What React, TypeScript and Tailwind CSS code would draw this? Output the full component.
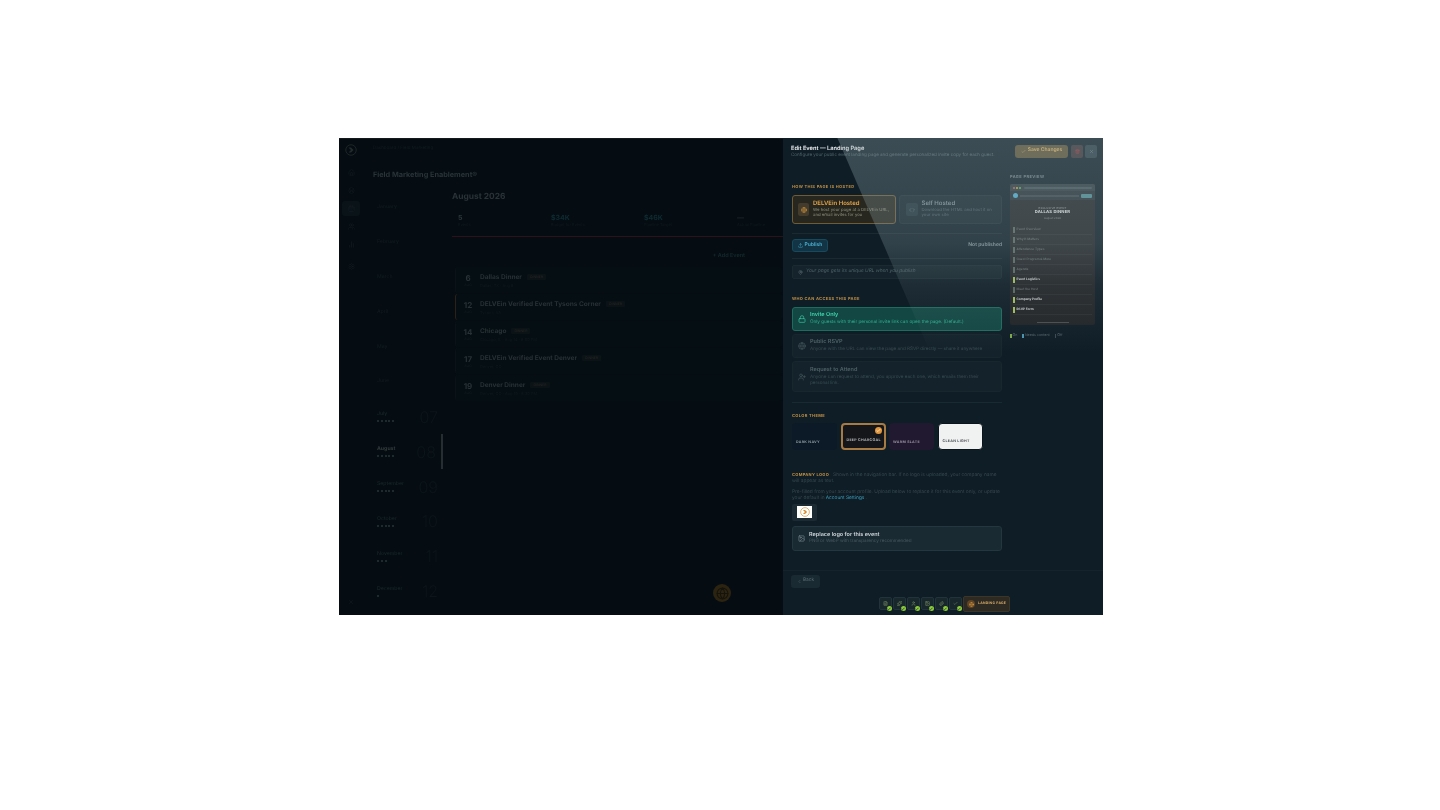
import React from "react";
import { Lock, Globe, UserPlus, Upload, Code, Check, Trash2, X, MapPin, ChevronLeft, Image, FileText, Settings, User, Calendar, Home, BarChart2, Users, Layers, Paperclip, Sparkles } from "lucide-react";

const months = [
  { n: "January", c: "01", dots: 0 },
  { n: "February", c: "02", dots: 0 },
  { n: "March", c: "03", dots: 0 },
  { n: "April", c: "04", dots: 0 },
  { n: "May", c: "05", dots: 0 },
  { n: "June", c: "06", dots: 0 },
  { n: "July", c: "07", dots: 5 },
  { n: "August", c: "08", dots: 5 },
  { n: "September", c: "09", dots: 5 },
  { n: "October", c: "10", dots: 5 },
  { n: "November", c: "11", dots: 3 },
  { n: "December", c: "12", dots: 1 },
];

const events = [
  { day: "6", t: "Dallas Dinner", w: "Dallas, TX · Aug 6" },
  { day: "12", t: "DELVEin Verified Event Tysons Corner", w: "Tysons, VA", on: true },
  { day: "14", t: "Chicago", w: "Chicago, IL · Aug 14 · 6:00 PM" },
  { day: "17", t: "DELVEin Verified Event Denver", w: "Denver, CO" },
  { day: "19", t: "Denver Dinner", w: "Denver, CO · Aug 19 · 6:30 PM" },
];

const stats = [
  { v: "5", l: "Events", c: "text-[#2c373b]", w: "w-[93px]" },
  { v: "$34K", l: "Budget for Events", c: "text-[#0e2c31]", w: "w-[93px]" },
  { v: "$46K", l: "Pipeline Target", c: "text-[#0e2c31]", w: "w-[93px]" },
  { v: "—", l: "Actual Pipeline", c: "text-[#1f282c]", w: "w-[42px]" },
];

const previewRows = [
  ["Event Overview", 0], ["Why It Matters", 0], ["Attendance Types", 0], ["Guest Program & More", 0], ["Agenda", 0],
  ["Event Logistics", 1], ["Meet the Host", 0], ["Company Profile", 1], ["RSVP Form", 1],
] as const;

function Logo({ size, color = "#d98a2b" }: { size: number; color?: string }) {
  return (
    <svg width={size} height={size} viewBox="0 0 24 24" fill="none">
      <circle cx="12" cy="12" r="10.5" stroke={color} strokeWidth="1.6" />
      <path d="M7 7h5l5 5-5 5H7l5-5z" fill={color} />
    </svg>
  );
}

function Dashboard() {
  return (
    <div className="flex w-[444px] h-full bg-[#050d12] border-t border-[#14191c]">
      <div className="w-[24px] shrink-0 flex flex-col items-center pt-[5px] text-[#141e24]">
        <div className="mb-[13px] opacity-60"><Logo size={12} color="#3a3f3f" /></div>
        <Home size={7} className="mb-[11px]" />
        <Layers size={7} className="mb-[7px]" />
        <div className="w-[18px] h-[15px] rounded-[3px] bg-[#0a1318] flex items-center justify-center mb-[7px]"><Calendar size={7} /></div>
        <Users size={7} className="mb-[11px]" />
        <BarChart2 size={7} className="mb-[15px]" />
        <Settings size={7} />
        <X size={6} className="mt-auto mb-[10px]" />
      </div>
      <div className="flex-1 min-w-0 flex flex-col pl-[10px]">
        <div className="h-[20px] flex items-center text-[4.5px] text-[#111b21]">Dashboard / Field Marketing</div>
        <div className="h-[13px] mt-[9px] text-[7.3px] leading-[13px] font-bold text-[#293338]">Field Marketing Enablement®</div>
        <div className="flex flex-1 min-h-0">
          <div className="w-[70px] shrink-0 pt-[9px] pl-[4px]">
            {months.map((m) => {
              const cur = m.c === "08";
              return (
                <div key={m.n} className={`relative h-[34.9px] flex items-center justify-between pr-[5px] ${cur ? "border-r-2 border-[#262e32]" : ""}`}>
                  <div>
                    <div className={`text-[5.2px] leading-[7px] ${cur ? "font-bold text-[#343b3e]" : m.dots ? "text-[#1a2a2c]" : "text-[#121c21]"}`}>{m.n}</div>
                    {m.dots > 0 && (
                      <div className="flex gap-[1.8px] mt-[2px]">
                        {Array.from({ length: m.dots }).map((_, i) => <span key={i} className="w-[2px] h-[2px] rounded-full bg-[#26363a]" />)}
                      </div>
                    )}
                  </div>
                  {m.dots > 0 && <div className="text-[16px] font-light text-[#0c151a]">{m.c}</div>}
                </div>
              );
            })}
          </div>
          <div className="flex-1 min-w-0 flex flex-col pl-[9px]">
            <div className="h-[14px] mt-[9px] text-[8.4px] leading-[14px] font-bold text-[#2a3337]">August 2026</div>
            <div className="flex mt-[9px] pl-[6px] border-b border-[#2e1219] h-[24px]">
              {stats.map((s) => (
                <div key={s.l} className={s.w}>
                  <div className={`text-[7px] leading-[9px] font-bold ${s.c}`}>{s.v}</div>
                  <div className="text-[4px] leading-[5px] text-[#10191e]">{s.l}</div>
                </div>
              ))}
            </div>
            <div className="h-[30px] pt-[8px] flex items-center justify-end pr-[38px] text-[5.5px] font-semibold text-[#132a2e]">+ Add Event</div>
            <div className="flex flex-col gap-[1px] pl-[3px]">
              {events.map((e) => (
                <div key={e.day} className={`h-[26px] flex items-center rounded-[3px] border-l ${e.on ? "border-[#2b2117]" : "border-[#0a1318]"} bg-[#050e13]`}>
                  <div className="w-[24px] text-center">
                    <div className="text-[8px] leading-[9px] font-bold text-[#283135]">{e.day}</div>
                    <div className="text-[3.5px] leading-[4px] text-[#141d22]">AUG</div>
                  </div>
                  <div>
                    <div className="flex items-center gap-[5px]">
                      <span className="text-[6.5px] leading-[9px] font-bold text-[#283135]">{e.t}</span>
                      <span className="text-[3.5px] leading-[6px] px-[3px] rounded-[1px] bg-[#0c1317] text-[#26261f]">DINNER</span>
                    </div>
                    <div className="text-[4px] leading-[5px] text-[#10191e] mt-[1px]">{e.w}</div>
                  </div>
                </div>
              ))}
            </div>
            <div className="flex-1 flex items-end justify-end pr-[52px] pb-[13px]">
              <div className="w-[18px] h-[18px] rounded-full bg-[#2c2411] flex items-center justify-center"><Globe size={13} className="text-[#15140c]" /></div>
            </div>
          </div>
        </div>
      </div>
    </div>
  );
}

function Label({ children, className = "" }: { children: React.ReactNode; className?: string }) {
  return <div className={`text-[4px] leading-[6px] font-bold tracking-[0.09em] text-[#c08f45] ${className}`}>{children}</div>;
}

function Access({ icon, title, sub, active, h }: { icon: React.ReactNode; title: string; sub: string; active?: boolean; h: string }) {
  return (
    <div className={`${h} flex items-center gap-[4px] px-[4px] rounded-[3px] border ${active ? "border-[#1f6b5f] bg-[#134743]" : "border-[#18272e] bg-[#14232b]"}`}>
      <div className={`w-[9px] flex justify-center shrink-0 ${active ? "text-[#39c9a4]" : "text-[#46565c]"}`}>{icon}</div>
      <div className="min-w-0">
        <div className={`text-[5.5px] leading-[7px] font-semibold ${active ? "text-[#3fd6ae]" : "text-[#4f6066]"}`}>{title}</div>
        <div className={`text-[4.6px] leading-[6px] mt-[1px] ${active ? "text-[#2faf90]" : "text-[#3a4a51]"}`}>{sub}</div>
      </div>
    </div>
  );
}

function Swatch({ name, cls, text, active }: { name: string; cls: string; text: string; active?: boolean }) {
  return (
    <div className={`relative w-[45px] h-[27px] rounded-[4px] flex items-end px-[4px] pb-[5px] ${cls}`}>
      <span className={`text-[3.6px] leading-[5px] font-bold tracking-[0.08em] whitespace-nowrap ${text}`}>{name}</span>
      {active && (
        <span className="absolute top-[2px] right-[2px] w-[7px] h-[7px] rounded-full bg-[#e0963c] flex items-center justify-center">
          <Check size={5} strokeWidth={3} className="text-white" />
        </span>
      )}
    </div>
  );
}

function Preview() {
  return (
    <div className="w-[85px] shrink-0 pt-[8px]">
      <div className="text-[4px] leading-[6px] font-semibold tracking-[0.1em] text-[#7d8b90]">PAGE PREVIEW</div>
      <div className="mt-[4px] h-[141px] rounded-[2px] overflow-hidden bg-[#222427] flex flex-col">
        <div className="h-[7px] flex items-center gap-[1px] px-[3px] bg-[#2f3b40]">
          <span className="w-[2px] h-[2px] rounded-full bg-[#d2604f]" />
          <span className="w-[2px] h-[2px] rounded-full bg-[#d5b24a]" />
          <span className="w-[2px] h-[2px] rounded-full bg-[#5fbd5b]" />
          <span className="ml-[2px] flex-1 h-[2px] rounded-full bg-[#44525a]" />
        </div>
        <div className="h-[9px] flex items-center px-[3px] bg-[#263036] gap-[2px]">
          <span className="w-[5px] h-[5px] rounded-full bg-[#4fb0d2]" />
          <span className="flex-1 h-[2px] bg-[#3a464c]" />
          <span className="w-[11px] h-[4px] rounded-[1px] bg-[#4f8d94]" />
        </div>
        <div className="h-[25px] flex flex-col items-center justify-center">
          <div className="text-[2.8px] leading-[4px] tracking-[0.06em] text-[#a0a4a4]">EXCLUSIVE EVENT</div>
          <div className="text-[4.2px] leading-[6px] font-bold tracking-[0.04em] text-[#e4e6e6]">DALLAS DINNER</div>
          <div className="text-[2.8px] leading-[4px] text-[#7d8488]">August 2026</div>
        </div>
        <div className="flex flex-col px-[3px]">
          {previewRows.map(([n, on]) => (
            <div key={n} className="h-[10px] flex items-center gap-[2px] border-b border-[#2b2e30]">
              <span className={`w-[1.5px] h-[6px] ${on ? "bg-[#a3bf5a]" : "bg-[#59675f]"}`} />
              <span className={`text-[3.2px] font-semibold ${on ? "text-[#e0e2e2]" : "text-[#656a6c]"}`}>{n}</span>
            </div>
          ))}
        </div>
        <div className="mt-auto mb-[3px] mx-auto w-[32px] h-[0.5px] bg-[#4a4d4e]" />
      </div>
      <div className="flex items-center gap-[5px] mt-[8px] text-[3.6px] text-[#58686e]">
        <span className="flex items-center gap-[1px]"><i className="w-[1.5px] h-[4px] bg-[#7da84a]" />On</span>
        <span className="flex items-center gap-[1px]"><i className="w-[1.5px] h-[4px] bg-[#4c93ac]" />Needs content</span>
        <span className="flex items-center gap-[1px]"><i className="w-[1.5px] h-[4px] bg-[#3c4b50]" />Off</span>
      </div>
    </div>
  );
}

function Panel() {
  const steps = [FileText, Sparkles, User, Image, Paperclip, Check];
  return (
    <div className="relative w-[320px] h-full bg-[#0f1d26] flex flex-col overflow-hidden">
      <div className="h-[28px] shrink-0 flex items-center pl-[8px] pr-[6px]">
        <div className="flex-1 min-w-0">
          <div className="text-[5.7px] leading-[8px] font-semibold text-[#f0f3f4] whitespace-nowrap">Edit Event — Landing Page</div>
          <div className="text-[4.5px] leading-[6px] text-[#51646c] whitespace-nowrap">Configure your public event landing page and generate personalized invite copy for each guest.</div>
        </div>
        <div className="w-[53px] h-[13px] ml-[5px] -mt-[2px] rounded-[3px] bg-[#5f5234] flex items-center justify-center gap-[2px] text-[5px] font-semibold text-[#e3b768]">
          <Check size={5} />Save Changes
        </div>
        <div className="w-[12px] h-[13px] ml-[3px] -mt-[2px] rounded-[2px] bg-[#3c3236] flex items-center justify-center"><Trash2 size={5} className="text-[#b83a44]" /></div>
        <div className="w-[12px] h-[13px] ml-[2px] -mt-[2px] rounded-[2px] bg-[#2a3b45] flex items-center justify-center"><X size={5} className="text-[#7d9099]" /></div>
      </div>

      <div className="flex-1 min-h-0 flex pl-[9px]">
        <div className="w-[210px] shrink-0 pt-[18px]">
          <Label>HOW THIS PAGE IS HOSTED</Label>
          <div className="flex gap-[3px] mt-[5px]">
            <div className="w-[104px] h-[29px] rounded-[3px] border border-[#6f5c36] bg-[#27271f] flex items-center gap-[4px] px-[5px]">
              <div className="w-[11px] h-[13px] rounded-[2px] bg-[#433b2b] flex items-center justify-center shrink-0"><Globe size={6} className="text-[#d9983f]" /></div>
              <div className="min-w-0">
                <div className="text-[6px] leading-[7px] font-semibold text-[#e6a64a]">DELVEin Hosted</div>
                <div className="text-[4.3px] leading-[5.5px] text-[#94917f] mt-[0.5px]">We host your page at a DELVEin URL, and email invites for you</div>
              </div>
            </div>
            <div className="w-[104px] h-[29px] rounded-[3px] border border-[#1d2d34] bg-[#15242c] flex items-center gap-[4px] px-[6px]">
              <div className="w-[12px] h-[13px] rounded-[2px] bg-[#21323a] flex items-center justify-center shrink-0"><Code size={6} className="text-[#66787e]" /></div>
              <div className="min-w-0">
                <div className="text-[6px] leading-[7px] font-semibold text-[#7d8e94]">Self Hosted</div>
                <div className="text-[4.3px] leading-[5.5px] text-[#50626a] mt-[0.5px]">Download the HTML and host it on your own site</div>
              </div>
            </div>
          </div>
          <div className="mt-[9px] pt-[5px] border-t border-[#1b2a31] flex items-center justify-between h-[19px]">
            <div className="w-[36px] h-[13px] rounded-[3px] border border-[#174a5c] bg-[#123444] flex items-center justify-center gap-[2px] text-[5px] font-semibold text-[#4db5d8]">
              <Upload size={5} />Publish
            </div>
            <div className="text-[5px] font-semibold text-[#86969c]">Not published</div>
          </div>
          <div className="mt-[6px] pt-[6px] border-t border-[#1b2a31]">
            <div className="h-[14px] rounded-[2px] border border-[#1b2a31] bg-[#15242c] flex items-center gap-[3px] px-[5px] text-[4.8px] italic text-[#4f6168]">
              <MapPin size={5} className="text-[#6a7c82]" />Your page gets its unique URL when you publish
            </div>
          </div>
          <Label className="mt-[17px]">WHO CAN ACCESS THIS PAGE</Label>
          <div className="flex flex-col gap-[3px] mt-[5px]">
            <Access active h="h-[24px]" icon={<Lock size={8} />} title="Invite Only" sub="Only guests with their personal invite link can open the page. (Default.)" />
            <Access h="h-[24px]" icon={<Globe size={8} />} title="Public RSVP" sub="Anyone with the URL can view the page and RSVP directly — share it anywhere" />
            <Access h="h-[31px]" icon={<UserPlus size={8} />} title="Request to Attend" sub="Anyone can request to attend, you approve each one, which emails them their personal link." />
          </div>
          <div className="mt-[10px] pt-[10px] border-t border-[#1a2a32]">
            <Label>COLOR THEME</Label>
            <div className="flex gap-[3.5px] mt-[4px]">
              <Swatch name="DARK NAVY" cls="bg-[#0c1a27]" text="text-[#8b98a0]" />
              <Swatch name="DEEP CHARCOAL" cls="bg-[#15161a] border-2 border-[#a87b45]" text="text-[#b0b4b6]" active />
              <Swatch name="WARM SLATE" cls="bg-[#211930]" text="text-[#97919e]" />
              <Swatch name="CLEAN LIGHT" cls="bg-[#f0f1f1] border border-[#0a141b]" text="text-[#4d5356]" />
            </div>
          </div>
          <div className="mt-[22px] text-[4.8px] leading-[5.7px] text-[#374950]">
            <div className="flex items-baseline gap-[4px] whitespace-nowrap">
              <span className="text-[4px] font-bold tracking-[0.08em] text-[#c08f45]">COMPANY LOGO</span>
              <span>Shown in the navigation bar. If no logo is uploaded, your company name</span>
            </div>
            <div>will appear as text.</div>
          </div>
          <div className="mt-[6px] text-[4.8px] leading-[5.7px] text-[#374950]">
            <div className="whitespace-nowrap">Pre-filled from your account profile. Upload below to replace it for this event only, or update</div>
            <div className="flex gap-[1.2px] whitespace-nowrap"><span>your default in</span><span className="text-[#3e9fbd]">Account Settings</span><span>.</span></div>
          </div>
          <div className="mt-[2px] w-[25px] h-[17px] rounded-[2px] bg-[#1c2b33] flex items-center justify-center">
            <div className="w-[15px] h-[12px] bg-white flex items-center justify-center"><Logo size={10} /></div>
          </div>
          <div className="mt-[5px] h-[25px] rounded-[3px] border border-[#243640] bg-[#1a2a33] flex items-center gap-[4px] px-[5px]">
            <Image size={7} className="text-[#7d8f96] shrink-0" />
            <div>
              <div className="text-[5.5px] leading-[7px] font-semibold text-[#d0d7da]">Replace logo for this event</div>
              <div className="text-[4.6px] leading-[6px] text-[#46585f]">PNG or WebP with transparency recommended</div>
            </div>
          </div>
        </div>
        <div className="w-[8px] shrink-0" />
        <Preview />
      </div>

      <div className="shrink-0 h-[27px] border-t border-[#15242c] flex items-center pl-[8px] pb-[6px]">
        <div className="w-[29px] h-[13px] rounded-[3px] bg-[#1a2a33] flex items-center justify-center gap-[1px] text-[4.8px] text-[#5c6e75]">
          <ChevronLeft size={5} />Back
        </div>
      </div>

      <div className="shrink-0 h-[18px] flex items-start pl-[96px] gap-[1.5px]">
        {steps.map((I, i) => (
          <div key={i} className="relative w-[12.5px] h-[13px] rounded-[2px] bg-[#17272c] border border-[#22343a] flex items-center justify-center">
            <I size={5} className="text-[#8b9b6e]" />
            <span className="absolute -right-[1px] -bottom-[2px] w-[5px] h-[5px] rounded-full bg-[#8ccc3a] flex items-center justify-center">
              <Check size={4} strokeWidth={4} className="text-[#0f1d26]" />
            </span>
          </div>
        ))}
        <div className="w-[47px] h-[16px] -mt-[1px] rounded-[2px] bg-[#2c2a22] border border-[#3d3626] flex items-center gap-[3px] px-[3px]">
          <span className="w-[8px] h-[8px] rounded-full bg-[#5f4526] flex items-center justify-center shrink-0"><Globe size={5} className="text-[#d9983f]" /></span>
          <span className="text-[3.4px] font-bold tracking-[0.07em] text-[#d2a667] whitespace-nowrap">LANDING PAGE</span>
        </div>
      </div>

      <div className="absolute inset-0 pointer-events-none bg-[linear-gradient(180deg,rgba(140,160,165,0.36)_0%,rgba(140,160,165,0.28)_22%,rgba(130,155,160,0.12)_31%,rgba(120,150,150,0)_45%)] [clip-path:polygon(17%_0,100%_0,100%_48%,48%_48%)]" />
    </div>
  );
}

export default function App() {
  return (
    <div className="w-[1440px] h-[810px] bg-white overflow-hidden pl-[339px] pt-[138px] [font-family:Inter,'Noto_Sans',sans-serif] [text-rendering:geometricPrecision]">
      <div className="flex w-[764px] h-[477px] overflow-hidden blur-[0.35px]">
        <Dashboard />
        <Panel />
      </div>
    </div>
  );
}
